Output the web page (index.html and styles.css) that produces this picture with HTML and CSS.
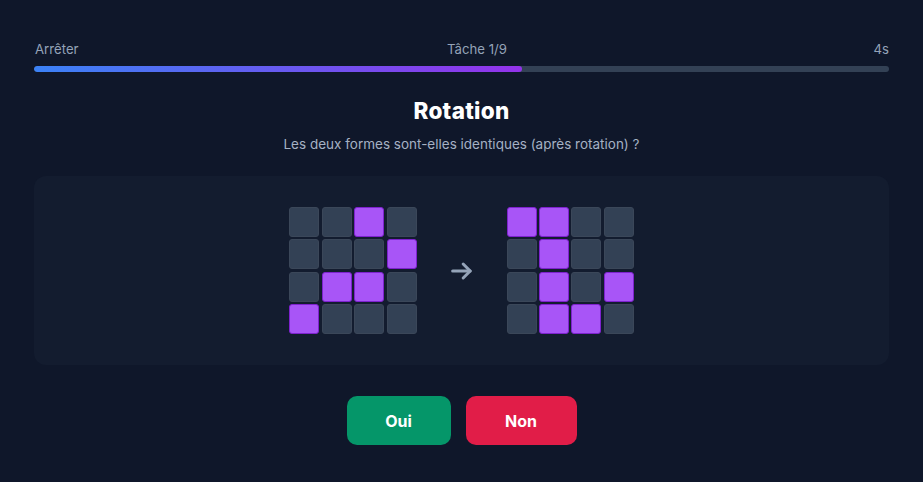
FILE: index.html
```html
<!DOCTYPE html>
<html lang="fr">
<head>
<meta charset="utf-8">
<title>Rotation</title>
<link rel="stylesheet" href="styles.css">
</head>
<body>
<main class="app">
  <header class="top">
    <span class="stop">Arrêter</span>
    <span class="task">Tâche 1/9</span>
    <span class="time">4s</span>
  </header>
  <div class="progress"><div class="fill" style="width:57.1%"></div></div>
  <h1 class="title">Rotation</h1>
  <p class="question">Les deux formes sont-elles identiques (après rotation) ?</p>
  <section class="panel">
    <div class="grid">
      <div class="cell"></div><div class="cell"></div><div class="cell on"></div><div class="cell"></div>
      <div class="cell"></div><div class="cell"></div><div class="cell"></div><div class="cell on"></div>
      <div class="cell"></div><div class="cell on"></div><div class="cell on"></div><div class="cell"></div>
      <div class="cell on"></div><div class="cell"></div><div class="cell"></div><div class="cell"></div>
    </div>
    <svg class="arrow" width="28" height="28" viewBox="0 0 24 24" fill="none" stroke="currentColor" stroke-width="2.6" stroke-linecap="round" stroke-linejoin="round"><path d="M4 12h15"/><path d="M13 6l6 6-6 6"/></svg>
    <div class="grid">
      <div class="cell on"></div><div class="cell on"></div><div class="cell"></div><div class="cell"></div>
      <div class="cell"></div><div class="cell on"></div><div class="cell"></div><div class="cell"></div>
      <div class="cell"></div><div class="cell on"></div><div class="cell"></div><div class="cell on"></div>
      <div class="cell"></div><div class="cell on"></div><div class="cell on"></div><div class="cell"></div>
    </div>
  </section>
  <div class="actions">
    <button class="btn yes">Oui</button>
    <button class="btn no">Non</button>
  </div>
</main>
</body>
</html>
```
FILE: styles.css
```css
* { box-sizing: border-box; }
html, body { margin: 0; padding: 0; }
body {
  background: #0f172a;
  font-family: Inter, "Liberation Sans", sans-serif;
  color: #e2e8f0;
  width: 923px;
  height: 482px;
  overflow: hidden;
}
.app {
  padding: 41px 34px 0 34px;
  display: flex;
  flex-direction: column;
}
.top {
  display: flex;
  justify-content: space-between;
  font-size: 13.2px;
  line-height: 16px;
  color: #94a3b8;
}
.stop { padding-left: 1px; }
.task { padding-left: 2px; }
.progress {
  margin-top: 9px;
  height: 6px;
  border-radius: 3px;
  background: #334155;
  overflow: hidden;
}
.fill {
  height: 100%;
  border-radius: 3px;
  background: linear-gradient(90deg, #3b82f6 0%, #9333ea 100%);
}
.title {
  margin: 25px 0 0 0;
  text-align: center;
  font-size: 22.5px;
  line-height: 28px;
  font-weight: 800;
  color: #ffffff;
  letter-spacing: 0.3px;
}
.question {
  margin: 10px 0 0 0;
  text-align: center;
  font-size: 13.5px;
  line-height: 18px;
  color: #a5b1c4;
}
.panel {
  margin-top: 23px;
  height: 189px;
  border-radius: 12px;
  background: #131c2f;
  display: flex;
  align-items: center;
  justify-content: center;
  gap: 31px;
}
.grid {
  display: grid;
  grid-template-columns: repeat(4, 30px);
  grid-auto-rows: 30px;
  gap: 2.4px;
}
.cell {
  border-radius: 3px;
  background: #334155;
  border: 1px solid #3b4759;
}
.cell.on {
  background: #a855f7;
  border-color: #7e22ce;
}
.arrow { color: #94a3b8; display: block; }
.actions {
  margin-top: 31px;
  display: flex;
  justify-content: center;
  gap: 15px;
}
.btn {
  height: 49px;
  border: none;
  border-radius: 10px;
  font-family: Inter, "Liberation Sans", sans-serif;
  font-size: 16px;
  font-weight: 700;
  color: #ffffff;
}
.yes { width: 104px; background: #059669; }
.no { width: 111px; background: #e11d48; }
```
